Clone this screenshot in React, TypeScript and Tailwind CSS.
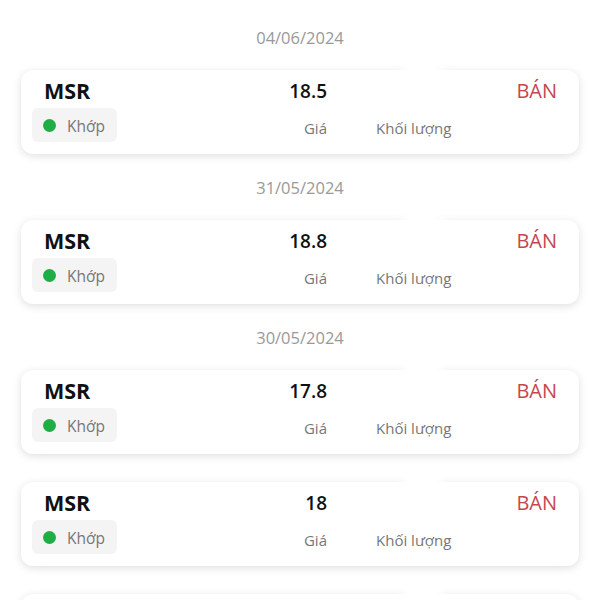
import React from "react";

type Order = { symbol: string; price: string; side: string; status: string };
type Group = { date?: string; orders: Order[] };

const groups: Group[] = [
    { date: "04/06/2024", orders: [{ symbol: "MSR", price: "18.5", side: "BÁN", status: "Khớp" }] },
    { date: "31/05/2024", orders: [{ symbol: "MSR", price: "18.8", side: "BÁN", status: "Khớp" }] },
    {
        date: "30/05/2024",
        orders: [
            { symbol: "MSR", price: "17.8", side: "BÁN", status: "Khớp" },
            { symbol: "MSR", price: "18", side: "BÁN", status: "Khớp" },
            { symbol: "MSR", price: "18.2", side: "BÁN", status: "Khớp" },
        ],
    },
];

const OrderCard = ({ order }: { order: Order }) => {
    return (
        <div className="relative mx-[21px] h-[84px] shrink-0 rounded-[12px] bg-white pl-[11px] pr-[22px] pt-[7px] shadow-[0_2px_9px_rgba(0,0,0,0.13)]">
            <div className="grid grid-cols-[225px_70px_1fr_auto] items-center">
                <div className="pl-[12px] text-[21.5px] font-bold leading-[28px] text-[#111]">{order.symbol}</div>
                <div className="text-right text-[19px] font-semibold leading-[28px] text-[#111]">{order.price}</div>
                <div className="relative h-[28px] pl-[49px]">
                    {/* volume is masked in the capture */}
                    <div className="absolute left-[74px] top-[-22px] h-[44px] w-[44px] rounded-full bg-white blur-[6px]"></div>
                </div>
                <div className="text-right text-[20px] leading-[28px] text-[#c4474f]">{order.side}</div>
            </div>
            <div className="mt-[3px] grid grid-cols-[225px_70px_1fr] items-center">
                <div>
                    <div className="flex h-[34px] w-[85px] items-center gap-[11px] rounded-[6px] bg-[#f4f4f4] pl-[11px]">
                        <span className="h-[13px] w-[13px] rounded-full bg-[#1fae45]"></span>
                        <span className="pt-[3px] text-[15.5px] text-[#777]">{order.status}</span>
                    </div>
                </div>
                <div className="pt-[6px] text-right text-[15px] text-[#777]">Giá</div>
                <div className="pl-[49px] pt-[6px] text-[15px] text-[#777]">Khối lượng</div>
            </div>
        </div>
    );
};

export default function App() {
    return (
        <div
            className="flex h-[600px] w-[600px] flex-col gap-[23px] overflow-hidden bg-white pt-[27px]"
            style={{ fontFamily: '"Open Sans", "Noto Sans", sans-serif' }}
        >
            {groups.map((group, i) => (
                <div key={i} className="flex flex-col">
                    {group.date && (
                        <div className="mb-[21px] text-center text-[16.5px] leading-[22px] text-[#999]">{group.date}</div>
                    )}
                    <div className="flex flex-col gap-[28px]">
                        {group.orders.map((order, j) => (
                            <OrderCard key={j} order={order} />
                        ))}
                    </div>
                </div>
            ))}
        </div>
    );
}
